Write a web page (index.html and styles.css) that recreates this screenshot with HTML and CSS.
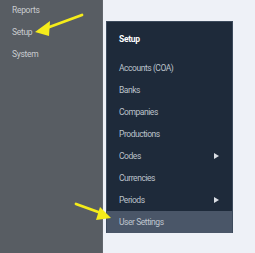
FILE: index.html
```html
<!DOCTYPE html>
<html>
<head>
<meta charset="utf-8">
<link rel="stylesheet" href="styles.css">
</head>
<body>
<div class="app">
  <nav class="sidebar">
    <div class="side-item">Reports</div>
    <div class="side-item">Setup</div>
    <div class="side-item">System</div>
  </nav>
  <main class="content">
    <div class="menu">
      <div class="menu-header">Setup</div>
      <div class="menu-item">Accounts (COA)</div>
      <div class="menu-item">Banks</div>
      <div class="menu-item">Companies</div>
      <div class="menu-item">Productions</div>
      <div class="menu-item has-sub">Codes<span class="caret"></span></div>
      <div class="menu-item">Currencies</div>
      <div class="menu-item has-sub">Periods<span class="caret"></span></div>
      <div class="menu-item active">User Settings</div>
    </div>
  </main>
  <svg class="arrows" width="255" height="253" viewBox="0 0 255 253">
    <g stroke="#f5ec1a" stroke-width="2.8" fill="#f5ec1a" stroke-linecap="round">
      <line x1="82" y1="15" x2="44" y2="29"/>
      <polygon points="35,32 50,21 49,36" stroke="none"/>
      <line x1="76" y1="204" x2="101" y2="213"/>
      <polygon points="111,218 96,220 100,207" stroke="none"/>
    </g>
  </svg>
</div>
</body>
</html>
```
FILE: styles.css
```css
html, body {
  margin: 0;
  padding: 0;
}
body {
  font-family: Roboto, "Noto Sans", sans-serif;
  background: #eef1f7;
}
.app {
  position: relative;
  display: flex;
  width: 255px;
  height: 253px;
  overflow: hidden;
}
.sidebar {
  width: 102px;
  flex: none;
  background: #585d63;
  border-right: 1px solid #62676d;
  margin-top: -1px;
}
.side-item {
  height: 22px;
  line-height: 22px;
  padding-left: 12px;
  font-size: 8.5px;
  letter-spacing: -0.3px;
  color: #c9ccd0;
}
.content {
  flex: 1;
  padding: 21px 0 0 3px;
}
.menu {
  width: 125px;
  background: #1e2a3a;
  border: 1px solid #3c4a5c;
  border-bottom: none;
}
.menu-header {
  height: 35px;
  line-height: 35px;
  padding-left: 12px;
  font-size: 8.5px;
  font-weight: 700;
  letter-spacing: -0.3px;
  color: #ffffff;
}
.menu-item {
  display: flex;
  align-items: center;
  justify-content: space-between;
  height: 22px;
  padding: 0 13px 0 12px;
  font-size: 8.5px;
  letter-spacing: -0.45px;
  color: #bcc2cb;
}
.menu-item.active {
  background: #4a5668;
  color: #bfc5ce;
}
.caret {
  width: 0;
  height: 0;
  border-top: 3.5px solid transparent;
  border-bottom: 3.5px solid transparent;
  border-left: 5px solid #d9dde3;
}
.arrows {
  position: absolute;
  left: 0;
  top: 0;
  pointer-events: none;
}
```
